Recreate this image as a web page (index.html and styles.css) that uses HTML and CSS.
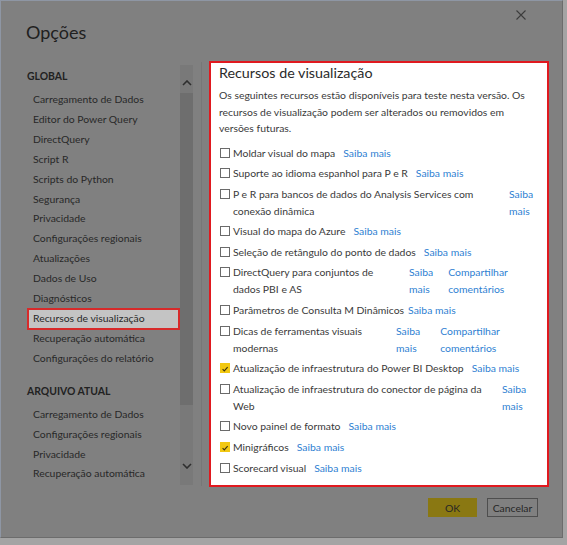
FILE: index.html
```html
<!DOCTYPE html>
<html lang="pt">
<head>
<meta charset="utf-8">
<title>Opções</title>
<link rel="stylesheet" href="styles.css">
</head>
<body>
<div class="dialog">
  <div class="header">
    <h1 class="title">Opções</h1>
    <svg class="close" width="10" height="10" viewBox="0 0 10 10"><path d="M0.5 0.5L9.5 9.5M9.5 0.5L0.5 9.5" stroke="#3c3c3c" stroke-width="1.1" fill="none"/></svg>
  </div>
  <div class="main">
    <nav class="nav">
      <div class="sec first">GLOBAL</div>
      <div class="item">Carregamento de Dados</div>
      <div class="item">Editor do Power Query</div>
      <div class="item">DirectQuery</div>
      <div class="item">Script R</div>
      <div class="item">Scripts do Python</div>
      <div class="item">Segurança</div>
      <div class="item">Privacidade</div>
      <div class="item">Configurações regionais</div>
      <div class="item">Atualizações</div>
      <div class="item">Dados de Uso</div>
      <div class="item">Diagnósticos</div>
      <div class="item active">Recursos de visualização</div>
      <div class="item">Recuperação automática</div>
      <div class="item">Configurações do relatório</div>
      <div class="sec">ARQUIVO ATUAL</div>
      <div class="item">Carregamento de Dados</div>
      <div class="item">Configurações regionais</div>
      <div class="item">Privacidade</div>
      <div class="item">Recuperação automática</div>
    </nav>
    <div class="scroll">
      <svg class="chev" width="10" height="6" viewBox="0 0 10 6"><path d="M1 5L5 1L9 5" stroke="#2e2e2e" stroke-width="1.6" fill="none"/></svg>
      <div class="thumb"></div>
      <div class="trackgap"></div>
      <svg class="chev" width="10" height="6" viewBox="0 0 10 6"><path d="M1 1L5 5L9 1" stroke="#2e2e2e" stroke-width="1.6" fill="none"/></svg>
    </div>
    <div class="sep"></div>
    <section class="panel">
      <h2 class="ptitle">Recursos de visualização</h2>
      <p class="desc">Os seguintes recursos estão disponíveis para teste nesta versão. Os recursos de visualização podem ser alterados ou removidos em versões futuras.</p>
      <div class="rows">
        <div class="row"><span class="cb"></span><span class="lbl">Moldar visual do mapa</span><a class="lk">Saiba mais</a></div>
        <div class="row"><span class="cb"></span><span class="lbl">Suporte ao idioma espanhol para P e R</span><a class="lk">Saiba mais</a></div>
        <div class="row"><span class="cb"></span><span class="lbl w-pr">P e R para bancos de dados do Analysis Services com conexão dinâmica</span><a class="lk stack">Saiba mais</a></div>
        <div class="row"><span class="cb"></span><span class="lbl">Visual do mapa do Azure</span><a class="lk">Saiba mais</a></div>
        <div class="row"><span class="cb"></span><span class="lbl">Seleção de retângulo do ponto de dados</span><a class="lk">Saiba mais</a></div>
        <div class="row"><span class="cb"></span><span class="lbl w-dq">DirectQuery para conjuntos de dados PBI e AS</span><a class="lk stack">Saiba mais</a><a class="lk stack share-dq">Compartilhar comentários</a></div>
        <div class="row"><span class="cb"></span><span class="lbl">Parâmetros de Consulta M Dinâmicos</span><a class="lk tight">Saiba mais</a></div>
        <div class="row"><span class="cb"></span><span class="lbl w-dc">Dicas de ferramentas visuais modernas</span><a class="lk stack">Saiba mais</a><a class="lk stack share-dc">Compartilhar comentários</a></div>
        <div class="row"><span class="cb on"><svg width="10" height="10" viewBox="0 0 10 10"><path d="M2 5.2L4.1 7.3L8.3 2.6" stroke="#3a3210" stroke-width="1.4" fill="none"/></svg></span><span class="lbl">Atualização de infraestrutura do Power BI Desktop</span><a class="lk">Saiba mais</a></div>
        <div class="row"><span class="cb"></span><span class="lbl w-cn">Atualização de infraestrutura do conector de página da Web</span><a class="lk stack">Saiba mais</a></div>
        <div class="row"><span class="cb"></span><span class="lbl">Novo painel de formato</span><a class="lk">Saiba mais</a></div>
        <div class="row"><span class="cb on"><svg width="10" height="10" viewBox="0 0 10 10"><path d="M2 5.2L4.1 7.3L8.3 2.6" stroke="#3a3210" stroke-width="1.4" fill="none"/></svg></span><span class="lbl">Minigráficos</span><a class="lk">Saiba mais</a></div>
        <div class="row"><span class="cb"></span><span class="lbl">Scorecard visual</span><a class="lk">Saiba mais</a></div>
      </div>
    </section>
  </div>
  <div class="footer">
    <button class="btn ok">OK</button>
    <button class="btn cancel">Cancelar</button>
  </div>
</div>
</body>
</html>
```
FILE: styles.css
```css
html, body {
  margin: 0;
  padding: 0;
  background: #a4a4a4;
}
body {
  width: 567px;
  height: 545px;
  overflow: hidden;
  font-family: "Lato", "Open Sans", sans-serif;
  font-size: 10.4px;
  color: #282828;
}
.dialog {
  width: 563px;
  height: 538px;
  box-sizing: border-box;
  border: 1px solid #8e96a4;
  border-right-color: #6c6c6c;
  border-bottom-color: #6c6c6c;
  background: #808080;
  display: flex;
  flex-direction: column;
}
.header {
  height: 60px;
  display: flex;
  justify-content: space-between;
  align-items: flex-start;
  padding: 0 36px 0 25px;
}
.title {
  margin: 19px 0 0;
  font-weight: 400;
  font-size: 18px;
  line-height: 24px;
  color: #202020;
}
.close {
  margin-top: 9px;
}
.main {
  height: 426px;
  display: flex;
}
.nav {
  width: 153px;
  margin-left: 26px;
}
.sec {
  font-weight: 700;
  line-height: 20px;
  margin: 12px 0 4px;
  color: #222;
}
.sec.first {
  margin-top: 5px;
}
.item {
  line-height: 19.9px;
  padding-left: 6px;
  white-space: nowrap;
}
.item.active {
  background: #c4c4c4;
  border: 2px solid #d72a2a;
  line-height: 17.9px;
  margin: -1px 0;
  padding-left: 4px;
}
.scroll {
  width: 13px;
  margin-top: 4px;
  height: 420px;
  background: #797979;
  display: flex;
  flex-direction: column;
  align-items: center;
}
.chev {
  margin: 15px 0 0;
  flex: none;
}
.thumb {
  width: 13px;
  height: 312px;
  margin-top: 7px;
  background: #6e6e6e;
}
.trackgap {
  height: 44px;
}
.scroll .chev:last-child {
  margin-top: 14px;
}
.sep {
  width: 1px;
  height: 424px;
  margin: 1px 0 0 8px;
  background: #777;
}
.panel {
  width: 340px;
  height: 426px;
  margin-left: 7px;
  box-sizing: border-box;
  border: 2px solid #e0191f;
  background: #fff;
  padding: 0 8px;
  color: #3a3a3a;
}
.ptitle {
  margin: 0;
  font-weight: 400;
  font-size: 14.3px;
  line-height: 20px;
  color: #2b2b2b;
}
.desc {
  margin: 4px 0 0;
  line-height: 16.5px;
}
.rows {
  margin-top: 8px;
  display: flex;
  flex-direction: column;
  gap: 3.6px;
}
.row {
  display: flex;
  align-items: flex-start;
  line-height: 17px;
  padding-left: 1px;
}
.cb {
  flex: none;
  width: 10px;
  height: 10px;
  box-sizing: border-box;
  border: 1px solid #6a6a6a;
  margin: 3px 3px 0 0;
  display: flex;
}
.cb.on {
  background: #f2c811;
  border-color: #f2c811;
}
.lbl {
  flex: none;
}
.w-pr { width: 268px; }
.w-dq { width: 168px; }
.w-dc { width: 155px; }
.w-cn { width: 261px; }
.lk {
  flex: none;
  color: #2f7fd2;
  margin-left: 8px;
  white-space: nowrap;
}
.lk.tight { margin-left: 4px; }
.lk.stack {
  white-space: normal;
  width: min-content;
}
.share-dq { margin-left: 15px; }
.share-dc { margin-left: 20px; }
.footer {
  display: flex;
  justify-content: flex-end;
  gap: 10px;
  padding: 11px 24px 0 0;
}
.btn {
  -webkit-appearance: none;
  appearance: none;
  height: 19px;
  box-sizing: border-box;
  font-family: inherit;
  font-size: 10.4px;
  padding: 0;
  color: #262626;
}
.btn.ok {
  width: 49px;
  background: #8a7812;
  border: none;
}
.btn.cancel {
  width: 51px;
  background: transparent;
  border: 1px solid #4e4e4e;
}
```
